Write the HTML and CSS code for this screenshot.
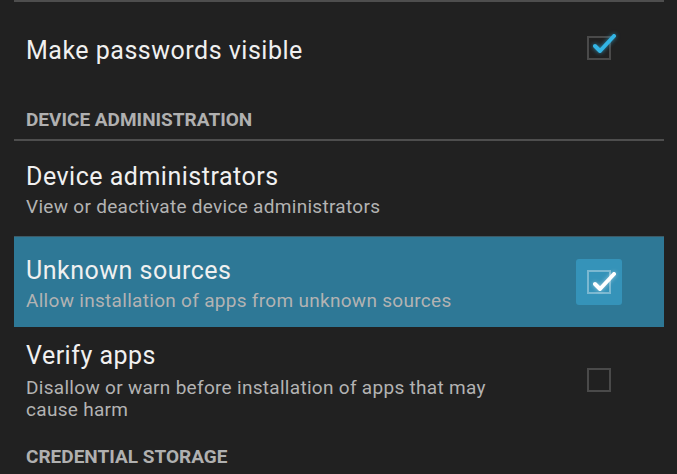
FILE: index.html
```html
<!DOCTYPE html>
<html>
<head>
<meta charset="utf-8">
<link rel="stylesheet" href="styles.css">
</head>
<body>
<div class="screen">
  <div class="divider"></div>
  <div class="pref single">
    <div class="texts"><div class="title">Make passwords visible</div></div>
    <div class="check">
      <span class="box"></span>
      <svg class="tick" viewBox="0 0 30 30" width="30" height="30"><path d="M6 15 L11 20 L25 5" fill="none" stroke="#33b5e5" stroke-width="4" stroke-linecap="round" stroke-linejoin="round"/></svg>
    </div>
  </div>
  <div class="header">DEVICE ADMINISTRATION</div>
  <div class="divider"></div>
  <div class="pref admin">
    <div class="texts">
      <div class="title">Device administrators</div>
      <div class="summary">View or deactivate device administrators</div>
    </div>
  </div>
  <div class="pref selected">
    <div class="texts">
      <div class="title">Unknown sources</div>
      <div class="summary">Allow installation of apps from unknown sources</div>
    </div>
    <div class="check pressed">
      <span class="box"></span>
      <svg class="tick" viewBox="0 0 30 30" width="30" height="30"><path d="M6 15 L11 20 L25 5" fill="none" stroke="#ffffff" stroke-width="4" stroke-linecap="round" stroke-linejoin="round"/></svg>
    </div>
  </div>
  <div class="pref verify">
    <div class="texts">
      <div class="title">Verify apps</div>
      <div class="summary">Disallow or warn before installation of apps that may<br>cause harm</div>
    </div>
    <div class="check">
      <span class="box"></span>
    </div>
  </div>
  <div class="header last">CREDENTIAL STORAGE</div>
</div>
</body>
</html>
```
FILE: styles.css
```css
html, body {
  margin: 0;
  padding: 0;
  background: #212121;
}
body {
  font-family: Roboto, "Noto Sans", sans-serif;
  width: 677px;
  height: 474px;
  overflow: hidden;
}
.screen {
  display: flex;
  flex-direction: column;
}
.divider {
  height: 2px;
  margin: 0 13px 0 14px;
  background: #4e4e4e;
}
.pref {
  display: flex;
  align-items: center;
  margin: 0 13px 0 14px;
  padding: 0 0 0 12px;
  box-sizing: border-box;
}
.texts {
  flex: 1;
  align-self: flex-start;
  display: flex;
  flex-direction: column;
  gap: 4px;
}
.title {
  font-size: 25px;
  line-height: 30px;
  letter-spacing: 0.5px;
  color: #f0f0f0;
}
.summary {
  font-size: 19px;
  line-height: 22px;
  letter-spacing: 0.3px;
  color: #b3b3b3;
}
.single {
  height: 96px;
}
.single .texts {
  padding-top: 34px;
}
.admin {
  height: 95px;
}
.admin .texts {
  padding-top: 21px;
}
.selected {
  height: 91px;
  background: #2e7896;
  box-shadow: inset 0 1px 0 #3d5a66;
}
.selected .texts {
  padding-top: 20px;
}
.verify {
  height: 110px;
}
.verify .texts {
  padding-top: 14px;
  gap: 6px;
}
.header {
  margin: 0 14px;
  padding: 11px 12px 8px;
  font-size: 19px;
  line-height: 22px;
  font-weight: 700;
  color: #b0b0b0;
}
.header.last {
  padding-top: 9px;
}
.check {
  position: relative;
  width: 46px;
  height: 46px;
  margin-right: 42px;
  border-radius: 3px;
  display: flex;
  align-items: center;
  justify-content: center;
}
.single .check,
.verify .check {
  margin-top: -4px;
}
.box {
  width: 20px;
  height: 20px;
  border: 2px solid #4a4a4a;
}
.pressed {
  background: #3593b9;
}
.pressed .box {
  border-color: rgba(255, 255, 255, 0.35);
}
.tick {
  position: absolute;
  left: 13px;
  top: 6px;
  filter: drop-shadow(0 0 2px rgba(51, 181, 229, 0.7));
}
.pressed .tick {
  top: 10px;
  left: 13px;
  filter: drop-shadow(0 0 2px rgba(255, 255, 255, 0.5));
}
```
